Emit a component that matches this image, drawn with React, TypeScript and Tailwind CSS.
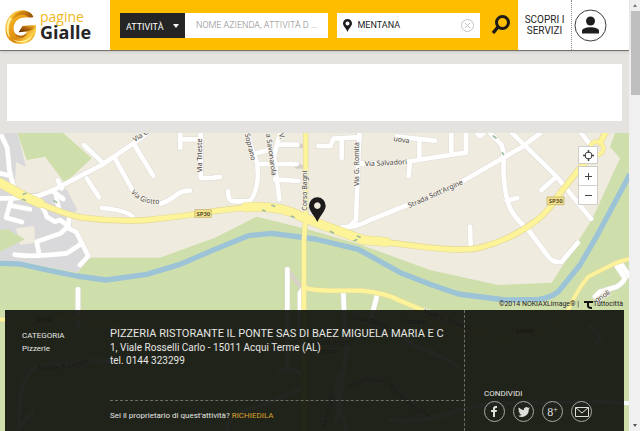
import React from "react";

const label = "fill-[#4a4744] stroke-[#f5f2ea] [paint-order:stroke] [stroke-width:5px]";

// Drawing units are a third of a pixel.
const streets = [
  "M5 48L22 85L28 150L42 205",
  "M0 160L25 166",
  "M0 235H35L115 228L160 210L305 135L400 70L440 40",
  "M252 75L310 130",
  "M400 70L460 168",
  "M345 115L397 210",
  "M482 251Q510 240 525 227T570 212",
  "M260 175L297 232",
  "M173 180L185 205",
  "M305 264Q380 270 400 292",
  "M35 235L18 293L66 306M28 256L90 268",
  "M160 215L190 237M168 225L176 265",
  "M110 250Q130 255 140 290L165 305L180 300L205 318L182 340L110 365L118 405",
  "M208 290L205 325L228 335L265 408L240 435",
  "M44 404Q90 412 200 400L243 372",
  "M234 508V620",
  "M541 40V84M541 58H605M602 40V174H645",
  "M645 171H660",
  "M685 214Q682 244 704 244H740Q765 244 774 170L772 130L752 75L745 40",
  "M768 100L805 90M772 132H890M840 40L822 110L838 238M836 74H892M825 178L895 183",
  "M955 78H992L1000 56L1065 52H1080M1025 56V115M1078 40L1068 300L1045 322",
  "M1025 322Q1070 322 1110 300L1230 252M1390 182L1560 85L1620 40",
  "M1070 130H1170M1220 126L1290 114L1398 98V40M1230 126L1226 168M1190 50L1305 62M1258 62V120M1354 40V100",
  "M1432 40L1440 48L1450 40M1470 38L1505 75Q1515 105 1510 140Q1512 230 1535 275Q1560 310 1585 330L1645 410Q1660 430 1685 425L1733 368",
  "M1535 38L1670 170L1773 296",
  "M1662 176L1624 211",
  "M1520 242L1552 234",
  "M1740 35L1775 80",
  "M1410 320L1412 375",
  "M862 448V620",
  "M910 505L900 520V625",
  "M1030 520L1034 620M1130 530L1110 610",
  "M1845 430L1875 475Q1868 490 1850 500L1800 515L1785 530M1862 430L1890 470",
];
const lowerStreets = [
  "M335 723H270Q130 735 95 750Q60 790 60 850L55 930",
  "M60 920L100 870",
  "M862 620V745M840 750Q880 740 905 765Q930 800 870 820Q780 860 740 870Q680 890 680 940",
  "M1035 610Q1050 730 1020 760Q1000 810 1020 870L1040 930M1030 760L1010 900",
  "M1290 700Q1340 710 1375 740",
  "M1170 900Q1270 910 1380 870Q1500 840 1650 850Q1780 840 1887 850",
  "M1200 640Q1240 690 1300 695",
  "M1770 620L1800 650L1790 670",
];
const spRoad =
  "M0 188Q30 215 75 232L120 250Q180 278 240 292Q340 306 440 300Q560 288 645 273Q735 262 770 259Q840 257 905 290L975 318Q1040 350 1100 360L1290 383Q1395 394 1440 383Q1530 360 1605 305Q1650 270 1672 230L1735 150L1775 105M1800 68L1818 36";
const spWide = "M0 188L75 230L120 250M735 262Q840 255 905 290L975 318L1090 360L1160 366";
const bridge =
  "M917 38V290L912 360V930M912 500Q920 510 985 512H1085Q1160 520 1195 540L1290 580L1400 620";
const south = "M1887 417Q1850 425 1835 435L1765 470Q1730 510 1700 580Q1650 650 1500 650Q1380 640 1280 600M0 598Q110 610 215 590Q320 610 370 625L600 650";

function TownMap() {
  return (
    <svg
      className="absolute inset-0 h-full w-full"
      viewBox="0 39 1887 894"
      preserveAspectRatio="xMidYMin slice"
      fill="none"
      strokeLinecap="round"
      strokeLinejoin="round"
      aria-label="Mappa"
      role="img"
    >
      <path fill="#efebdf" d="M0 0H1900V940H0z" />
      <path
        fill="#d9d9dc"
        d="M0 39H52L78 142L48 125L45 195L75 222L200 208L232 270L205 290L220 330L268 408L232 458L60 424L0 424z"
      />
      <path fill="#efebdf" d="M48 325L103 318L105 368L60 375z" />
      <path
        fill="#cfdfac"
        d="M52 39H190L275 115L195 190L135 110L80 120zM0 330L20 327L75 358L0 395z
        M0 422L60 425L232 458L268 413H480L645 353L770 290L920 327L1085 375L1290 450L1495 495L1655 488L1775 300L1860 115L1830 80L1845 39H1900V940H0z"
      />
      <path
        stroke="#9cc3d6"
        strokeWidth="16"
        strokeLinecap="butt"
        d="M-5 430L60 432L150 452L230 468L318 480L440 463L540 433L645 388L745 347L815 340L945 357L1075 388L1205 460L1290 493L1375 522L1515 540L1615 538Q1650 535 1675 515L1740 435L1795 340L1890 162"
      />
      <path d="M900 78H910M890 140H905M870 460L900 498" stroke="#d8d0c6" strokeWidth="13" />
      <g stroke="#dedbd6" strokeWidth="17">
        {streets.map((d) => <path key={d} d={d} />)}
      </g>
      <g stroke="#fff" strokeWidth="14">
        {streets.map((d) => <path key={d} d={d} />)}
      </g>
      <g stroke="#f8fbff" strokeWidth="12">
        {lowerStreets.map((d) => <path key={d} d={d} />)}
      </g>
      <path d={south} stroke="#e3d99c" strokeWidth="14" />
      <path d={south} stroke="#fcf29b" strokeWidth="11" />
      <path d={bridge} stroke="#e3d99a" strokeWidth="16" />
      <path d={spRoad} stroke="#e3d895" strokeWidth="19" />
      <path d={spWide} stroke="#e3d895" strokeWidth="29" />
      <circle cx="1790" cy="85" r="20" stroke="#e3d895" strokeWidth="14" />
      <path d={bridge} stroke="#fcf39b" strokeWidth="13" />
      <path d={spRoad} stroke="#fdf49a" strokeWidth="15" />
      <path d={spWide} stroke="#fdf49a" strokeWidth="26" />
      <circle cx="1790" cy="85" r="20" stroke="#fdf49a" strokeWidth="11" />
      <path
        d="M70 223l8-3M68 238l8 3M162 242l8 5M788 270l7 3M816 256l8 3M874 288l8 4M991 334l9 5M1062 362l8-3M1072 348l8 4M1480 48l8 6M1507 98l4 6"
        stroke="#9dbda0"
        strokeWidth="5"
      />
      <g fontFamily="'Noto Sans', sans-serif" fontSize="21" className={label}>
        <text transform="translate(404 66) rotate(-32)">Via C</text>
        <path id="giotto" d="M392 217Q425 258 485 250" className="fill-none stroke-none" />
        <text><textPath href="#giotto">Via Giotto</textPath></text>
        <text transform="translate(607 157) rotate(-90)">Via Trieste</text>
        <text transform="translate(734 42) rotate(76)">Soprano</text>
        <text transform="translate(798 42) rotate(82)">a Savonarola</text>
        <text transform="translate(836 42) rotate(75)">V.</text>
        <text transform="translate(922 272) rotate(-90)">Corso Bagni</text>
        <text transform="translate(1076 198) rotate(-90)">Via G. Romita</text>
        <text x="1095" y="139" transform="rotate(-3 1095 139)">Via Salvadori</text>
        <text x="1180" y="63" transform="rotate(8 1180 63)">uova</text>
        <text transform="translate(1228 264) rotate(-24)">Strada Sott'Argine</text>
        <text transform="translate(1790 548) rotate(-32)">gnoli</text>
        <path id="loreto" d="M112 750Q190 752 270 728" className="fill-none stroke-none" />
        <text><textPath href="#loreto">Strada di Loreto</textPath></text>
        <text transform="translate(1055 596) rotate(15)">Viale Donati</text>
        <text x="1200" y="613">Piazzale</text>
        <text x="930" y="675">Piazza degli</text>
        <text x="955" y="702">Alpini</text>
        <path id="passeggiata" d="M1050 808Q1130 755 1180 815Q1230 865 1290 898" className="fill-none stroke-none" />
        <text><textPath href="#passeggiata">Passeggiata Montestregone</textPath></text>
        <text transform="translate(975 930) rotate(-75)">Via Fossato</text>
        <text transform="translate(1270 580) rotate(20)">Viale L. Einaudi</text>
      </g>
      <g fontFamily="'Noto Sans', sans-serif" fontWeight="700" fontSize="18" textAnchor="middle" fill="#5c5432">
        <path d="M586 269H634V292H586zM1642 231H1692V254H1642z" fill="#f5e28b" stroke="#b8a75f" strokeWidth="2" />
        <text x="610" y="287">SP30</text>
        <text x="1667" y="249">SP30</text>
        <text x="133" y="606">SP334</text>
        <text x="1575" y="640">SP456</text>
      </g>
      <path
        fill="#1e1b1c"
        fillRule="evenodd"
        d="M952 306C944 286 927 273 927 257A25 25 0 0 1 977 257C977 273 960 286 952 306zM952 247a10 10 0 1 0 .1 0z"
      />
    </svg>
  );
}

function Logo() {
  return (
    <a href="#" aria-label="pagine Gialle" className="flex w-[110px] shrink-0 items-center pl-[5px]">
      <svg width="33" height="40" viewBox="9 -3 99 120">
        <defs>
          <linearGradient id="gold" x1="0" y1="0" x2="1" y2="1">
            <stop offset="0" stopColor="#ffe36a" />
            <stop offset=".3" stopColor="#f0a81c" />
            <stop offset=".6" stopColor="#d98a10" />
            <stop offset=".8" stopColor="#ffd24a" />
            <stop offset="1" stopColor="#a75d0b" />
          </linearGradient>
          <linearGradient id="curl" x1="0" y1="0" x2="1" y2="0">
            <stop offset="0" stopColor="#e39a18" />
            <stop offset=".6" stopColor="#c47a10" />
            <stop offset="1" stopColor="#8a4c08" />
          </linearGradient>
          <linearGradient id="bar" x1="0" y1="1" x2="1" y2="0">
            <stop offset="0" stopColor="#4d2504" />
            <stop offset=".5" stopColor="#b0650a" />
            <stop offset="1" stopColor="#f9c02c" />
          </linearGradient>
        </defs>
        <path
          fill="url(#gold)"
          d="M94 32C84 10 52 6 30 24C10 40 5 72 16 94C28 116 62 120 84 106C98 96 105 76 101 58L62 60L50 79L76 76C70 92 48 94 39 82C30 68 36 46 52 38C66 31 80 36 94 32z"
        />
        <path fill="url(#curl)" d="M94 32C86 16 66 12 48 20C38 25 32 34 30 44C44 26 62 22 74 30C82 36 90 36 94 32z" />
        <path fill="url(#bar)" d="M62 60L101 58C96 70 86 73 76 76L50 79z" />
        <path fill="#fff0a0" d="M24 34C10 54 10 80 24 96C18 78 18 54 30 38zM32 100C50 110 74 106 90 90C84 106 52 118 32 100z" />
        <path fill="#b56a0b" d="M39 82C46 92 66 92 74 80C72 98 46 102 39 82z" />
      </svg>
      <span className="ml-[2px] flex flex-col font-['Open_Sans',sans-serif]">
        <span className="text-[14px] leading-[14px] text-[#f0b81c]">pagine</span>
        <span className="text-[18px] font-bold leading-[17px] text-[#252525]">Gialle</span>
      </span>
    </a>
  );
}

function Header() {
  return (
    <header className="relative z-10 flex h-[51px] shrink-0 border-b border-[#77736b] bg-white shadow-sm">
      <Logo />
      <form className="flex min-w-0 flex-1 items-center bg-[#ffbd00] pl-[10px]" onSubmit={(e) => e.preventDefault()}>
        <div className="relative h-[25px] w-[65px] shrink-0 bg-[#252525]">
          <select aria-label="Tipo di ricerca" className="h-full w-full appearance-none bg-transparent pl-[6px] text-[9px] text-white">
            <option>ATTIVITÀ</option>
          </select>
          <span className="pointer-events-none absolute right-[6px] top-[11px] border-x-[3px] border-t-[4px] border-x-transparent border-t-white" />
        </div>
        <input aria-label="Cosa" placeholder="NOME AZIENDA, ATTIVITÀ D ..." className="h-[25px] min-w-0 flex-1 bg-white pl-[11px] text-[9px] font-light placeholder:text-[#8b8b8b]" />
        <div className="ml-[9px] flex h-[25px] min-w-0 flex-1 items-center bg-white px-[6px]">
          <svg width="9" height="13" viewBox="0 0 9 13" className="shrink-0">
            <path fillRule="evenodd" fill="#1c1c1c" d="M4.500 13C3 9 0 7 0 4.500a4.500 4.500 0 0 1 9 0C9 7 6 9 4.500 13zM4.500 2.500a2 2 0 1 0 .01 0z" />
          </svg>
          <input aria-label="Dove" defaultValue="MENTANA" className="ml-[6px] h-full min-w-0 flex-1 bg-transparent text-[9px] text-[#222] outline-none" />
          <button type="button" aria-label="Cancella">
            <svg width="13" height="13" viewBox="0 0 13 13" fill="none" stroke="#c4c4c4">
              <circle cx="6.5" cy="6.500" r="6" />
              <path d="M4 4l5 5M9 4L4 9" />
            </svg>
          </button>
        </div>
        <button aria-label="Cerca" className="flex w-[38px] shrink-0 justify-center pl-[4px]">
          <svg width="20" height="20" viewBox="0 0 20 20" fill="none" stroke="#1d1b16">
            <circle cx="11.500" cy="7.500" r="6" strokeWidth="3" />
            <path d="M7 12L2 18" strokeWidth="3.500" />
          </svg>
        </button>
      </form>
      <a href="#" className="flex w-[53px] shrink-0 items-center justify-center text-center text-[10px] leading-[11px] text-[#252525]">
        SCOPRI I<br />SERVIZI
      </a>
      <button aria-label="Profilo" className="w-[58px] shrink-0 border-l border-dotted border-[#888] pl-[2px]">
        <svg width="33" height="33" viewBox="0 0 33 33">
          <circle cx="16.500" cy="16.500" r="15.500" fill="none" stroke="#3b3b3b" />
          <circle cx="16.500" cy="12" r="4.500" fill="#1e1e1e" />
          <path fill="#1e1e1e" d="M8 24.500V22C8 17 25 17 25 22V24.500z" />
        </svg>
      </button>
    </header>
  );
}

const control = "flex w-full items-center justify-center border border-[#d0cec8] bg-white text-[#444]";
const share = "flex h-[21px] w-[21px] items-center justify-center rounded-full border border-[#a8a8a3] text-[#dededb]";

function MapControls() {
  return (
    <div className="absolute right-[31px] top-[13px] flex w-[20px] flex-col">
      <button aria-label="Centra" className={`${control} mb-[2px] h-[18px]`}>
        <svg width="11" height="11" viewBox="0 0 11 11" fill="none" stroke="currentColor">
          <circle cx="5.500" cy="5.500" r="3.500" />
          <path strokeWidth="1.500" d="M5.500 0V3M5.500 8V11M0 5.500H3M8 5.500H11" />
        </svg>
      </button>
      <button aria-label="Ingrandisci" className={`${control} h-[20px]`}>
        <svg width="7" height="7" viewBox="0 0 7 7" stroke="currentColor"><path d="M0 3.500H7M3.500 0V7" /></svg>
      </button>
      <button aria-label="Riduci" className={`${control} h-[19px] border-t-0`}>
        <svg width="7" height="7" viewBox="0 0 7 7" stroke="currentColor"><path d="M0 3.500H7" /></svg>
      </button>
    </div>
  );
}

function BusinessPanel() {
  return (
    <div className="absolute inset-x-[5px] bottom-0 flex h-[121px] bg-[#12140f]/93 pr-[1px] text-[#e6e6e3]">
      <div className="flex min-w-0 flex-1">
        <div className="w-[105px] shrink-0 pl-[17px] pt-[19px] text-[8px] leading-[13px]">
          <p>CATEGORIA</p>
          <p>Pizzerie</p>
        </div>
        <div className="flex min-w-0 flex-1 flex-col">
          <h1 className="whitespace-nowrap pt-[17px] text-[11px] leading-[14px]">PIZZERIA RISTORANTE IL PONTE SAS DI BAEZ MIGUELA MARIA E C</h1>
          <address className="text-[10px] not-italic leading-[13px]">
            1, Viale Rosselli Carlo - 15011 Acqui Terme (AL)<br />tel. 0144 323299
          </address>
          <p className="mt-auto h-[31px] border-t border-dashed border-[#6b6d67] pt-[9px] text-[8px] leading-[12px]">
            Sei il proprietario di quest'attività? <a href="#" className="text-[#dda52b]">RICHIEDILA</a>
          </p>
        </div>
      </div>
      <div className="flex w-[159px] shrink-0 flex-col border-l border-dashed border-[#6b6d67] pl-[19px]">
        <p className="mt-auto text-[8px] leading-[10px]">CONDIVIDI</p>
        <div className="mb-[9px] mt-[2px] flex gap-[8px]">
          <button aria-label="Facebook" className={share}>
            <svg width="7" height="11" viewBox="0 0 7 11" fill="currentColor"><path d="M2 11V6H0V4H2V2.500Q2 0 4.500 0H6V2H5Q4 2 4 3V4H6L5.600 6H4V11z" /></svg>
          </button>
          <button aria-label="Twitter" className={share}>
            <svg width="12" height="12" viewBox="0 0 24 24" fill="currentColor"><path d="M24 4.600a10 10 0 0 1-2.800.8 5 5 0 0 0 2.100-2.700 10 10 0 0 1-3.100 1.200 4.900 4.900 0 0 0-8.400 4.500A14 14 0 0 1 1.700 3.200a4.900 4.900 0 0 0 1.500 6.500A5 5 0 0 1 1 9.100a4.900 4.900 0 0 0 3.900 4.900 5 5 0 0 1-2.200.1 4.900 4.900 0 0 0 4.600 3.400A10 10 0 0 1 0 19.500 14 14 0 0 0 21.500 7z" /></svg>
          </button>
          <button aria-label="Google+" className={`${share} font-['Liberation_Serif',serif] text-[12px] leading-none`}>
            <span>8<sup className="text-[8px]">+</sup></span>
          </button>
          <button aria-label="Email" className={share}>
            <svg width="14" height="10" viewBox="0 0 14 10" fill="none" stroke="currentColor"><path d="M.5.5H13.500V9.500H.5zM.5.500L7 6L13.500.5" /></svg>
          </button>
        </div>
      </div>
    </div>
  );
}

export default function App() {
  return (
    <div className="flex h-screen overflow-hidden bg-[#e4e3e0] font-[Roboto,'Liberation_Sans',sans-serif]">
      <div className="flex min-w-0 flex-1 flex-col">
        <Header />
        <div className="mx-[7px] mb-[12px] mt-[13px] h-[57px] shrink-0 bg-white" />
        <main className="relative min-h-0 flex-1 overflow-hidden">
          <TownMap />
          <MapControls />
          <div className="absolute bottom-[121px] right-[6px] flex items-center gap-[5px] text-[7px] leading-[11px] text-[#252525]">
            <span>©2014 NOKIAXLimage® |</span>
            <a href="#" className="flex items-center">
              <svg width="9" height="8" viewBox="0 0 9 8" fill="none" stroke="#111" strokeWidth="2"><path d="M0 1H9M4 1V5Q4 7 8 7" /></svg>
              Tuttocittà
            </a>
          </div>
          <BusinessPanel />
        </main>
      </div>
      <div className="flex w-[11px] shrink-0 flex-col items-center justify-between bg-[#f0f0f0] py-[4px]" aria-hidden="true">
        <div className="flex w-full flex-col items-center">
          <span className="border-x-[2px] border-b-[3px] border-x-transparent border-b-[#777]" />
          <span className="ml-[2px] mt-[4px] h-[84px] w-[9px] bg-[#bfbfbf]" />
        </div>
        <span className="border-x-[2px] border-t-[3px] border-x-transparent border-t-[#555]" />
      </div>
    </div>
  );
}
